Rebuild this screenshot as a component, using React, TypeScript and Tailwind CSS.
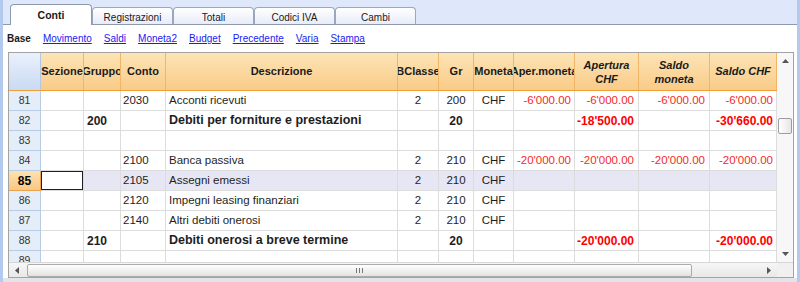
import React from "react";

type Row = {
  n: number;
  gruppo?: string;
  conto?: string;
  desc?: string;
  bclasse?: string;
  gr?: string;
  moneta?: string;
  apMon?: string;
  apChf?: string;
  saMon?: string;
  saChf?: string;
  bold?: boolean;
  sel?: boolean;
};

const rows: Row[] = [
  { n: 81, conto: "2030", desc: "Acconti ricevuti", bclasse: "2", gr: "200", moneta: "CHF", apMon: "-6'000.00", apChf: "-6'000.00", saMon: "-6'000.00", saChf: "-6'000.00" },
  { n: 82, gruppo: "200", desc: "Debiti per forniture e prestazioni", gr: "20", apChf: "-18'500.00", saChf: "-30'660.00", bold: true },
  { n: 83 },
  { n: 84, conto: "2100", desc: "Banca passiva", bclasse: "2", gr: "210", moneta: "CHF", apMon: "-20'000.00", apChf: "-20'000.00", saMon: "-20'000.00", saChf: "-20'000.00" },
  { n: 85, conto: "2105", desc: "Assegni emessi", bclasse: "2", gr: "210", moneta: "CHF", sel: true },
  { n: 86, conto: "2120", desc: "Impegni leasing finanziari", bclasse: "2", gr: "210", moneta: "CHF" },
  { n: 87, conto: "2140", desc: "Altri debiti onerosi", bclasse: "2", gr: "210", moneta: "CHF" },
  { n: 88, gruppo: "210", desc: "Debiti onerosi a breve termine", gr: "20", apChf: "-20'000.00", saChf: "-20'000.00", bold: true },
  { n: 89 },
];

const cols = "grid grid-cols-[32px_43px_37px_45px_232px_41px_35px_40px_61px_64px_71px_67px]";

const tabs = ["Registrazioni", "Totali", "Codici IVA", "Cambi"];
const links = ["Movimento", "Saldi", "Moneta2", "Budget", "Precedente", "Varia", "Stampa"];

function TabStrip() {
  return (
    <div className="flex h-[25px] shrink-0 items-end border-b border-[#8e9aae] pl-[7px]">
      <div className="relative z-10 -mb-px flex h-[21px] w-[82px] items-center justify-center rounded-t-[4px] border border-b-0 border-[#8e9aae] bg-white pt-[1px] text-[10.5px] font-bold">
        Conti
      </div>
      {tabs.map((t) => (
        <div
          key={t}
          className="flex h-[17px] w-[81px] items-center justify-center rounded-t-[4px] border border-b-0 border-[#9ba7ba] bg-gradient-to-b from-white to-[#e8ecf8] pt-[2px] text-[10px]"
        >
          {t}
        </div>
      ))}
    </div>
  );
}

function LinkBar() {
  return (
    <div className="flex h-[27px] shrink-0 items-center gap-[12px] pl-[4px] text-[10px]">
      <span className="font-bold">Base</span>
      {links.map((l) => (
        <a key={l} href="#" className="text-[#1b1bf0] underline">
          {l}
        </a>
      ))}
    </div>
  );
}

function HeaderRow() {
  const hc = "flex items-center justify-center overflow-hidden whitespace-nowrap border-r border-[#f0b566] text-[11px] font-bold";
  return (
    <div className={`${cols} h-[38px] border-b border-[#ee9f3a] bg-gradient-to-b from-[#fde4b6] to-[#f9cb87]`}>
      <div className="border-r border-[#b3c7e4] bg-gradient-to-b from-[#eaf1fc] to-[#c9daf3]" />
      <div className={hc}>Sezione</div>
      <div className={hc}>Gruppo</div>
      <div className={hc}>Conto</div>
      <div className={hc}>Descrizione</div>
      <div className={hc}>BClasse</div>
      <div className={hc}>Gr</div>
      <div className={hc}>Moneta</div>
      <div className={hc}>Aper.moneta</div>
      <div className={`${hc} text-center italic leading-[14px]`}>
        <span>Apertura<br />CHF</span>
      </div>
      <div className={`${hc} text-center italic leading-[14px]`}>
        <span>Saldo<br />moneta</span>
      </div>
      <div className={`${hc} italic`}>Saldo CHF</div>
    </div>
  );
}

function DataRow({ r }: { r: Row }) {
  const c = "flex items-center overflow-hidden whitespace-nowrap border-r border-b border-[#dcdcdc]";
  const txt = r.bold ? "font-bold text-[12px]" : "text-[11.5px]";
  const red = r.bold ? "font-bold text-[12px] text-[#ff0000]" : "text-[11.5px] text-[#f42a2a]";
  return (
    <div className={`${cols} h-[20px] ${r.sel ? "bg-[#e6e6f4]" : "bg-white"} text-[#1e1e1e]`}>
      <div
        className={`flex items-center justify-center border-b border-r ${
          r.sel
            ? "border-[#eda24a] bg-gradient-to-b from-[#fde2b2] to-[#f9c882] text-[12px] font-bold text-black"
            : "border-[#b9cce6] bg-[#e5edf8] text-[10.5px] text-[#333]"
        }`}
      >
        {r.n}
      </div>
      <div className={`${c} ${r.sel ? "bg-white shadow-[inset_0_0_0_1px_#1f1f1f]" : ""}`} />
      <div className={`${c} pl-[3px] ${txt}`}>{r.gruppo}</div>
      <div className={`${c} pl-[2px] ${txt}`}>{r.conto}</div>
      <div className={`${c} pl-[3px] ${r.bold ? "text-[12.5px] font-bold" : "text-[11.5px]"}`}>{r.desc}</div>
      <div className={`${c} justify-center ${txt}`}>{r.bclasse}</div>
      <div className={`${c} justify-center ${txt}`}>{r.gr}</div>
      <div className={`${c} justify-center ${txt}`}>{r.moneta}</div>
      <div className={`${c} justify-end pr-[3px] ${red}`}>{r.apMon}</div>
      <div className={`${c} justify-end pr-[4px] ${red}`}>{r.apChf}</div>
      <div className={`${c} justify-end pr-[4px] ${red}`}>{r.saMon}</div>
      <div className={`${c} justify-end pr-[3px] ${red}`}>{r.saChf}</div>
    </div>
  );
}

function VScroll() {
  return (
    <div className="flex w-[16px] shrink-0 flex-col bg-[#f7f7f7]">
      <div className="flex h-[16px] items-center justify-center">
        <svg width="7" height="4" viewBox="0 0 7 4"><polygon points="3.5,0 7,4 0,4" fill="#555" /></svg>
      </div>
      <div className="flex-1">
        <div className="mx-[1px] mt-[49px] h-[16px] rounded-[2px] border border-[#9c9c9c] bg-gradient-to-r from-white to-[#e6e6e6]" />
      </div>
      <div className="flex h-[16px] items-center justify-center">
        <svg width="7" height="4" viewBox="0 0 7 4"><polygon points="0,0 7,0 3.5,4" fill="#555" /></svg>
      </div>
    </div>
  );
}

function HScroll() {
  return (
    <div className="flex h-[15px] shrink-0 border-t border-[#d6d6d6] bg-gradient-to-b from-[#f6f6f6] to-[#e8e8e8]">
      <div className="flex w-[16px] items-center justify-center">
        <svg width="4" height="7" viewBox="0 0 4 7"><polygon points="0,3.5 4,0 4,7" fill="#555" /></svg>
      </div>
      <div className="flex flex-1 items-center pl-[2px]">
        <div className="flex h-[13px] w-[665px] items-center justify-center gap-[2px] rounded-[2px] border border-[#aaaaaa] bg-gradient-to-b from-white to-[#e2e2e2]">
          <span className="h-[5px] w-px bg-[#777]" />
          <span className="h-[5px] w-px bg-[#777]" />
          <span className="h-[5px] w-px bg-[#777]" />
        </div>
      </div>
      <div className="flex w-[16px] items-center justify-center">
        <svg width="4" height="7" viewBox="0 0 4 7"><polygon points="4,3.5 0,0 0,7" fill="#555" /></svg>
      </div>
      <div className="w-[16px] bg-[#f0f0f0]" />
    </div>
  );
}

export default function App() {
  return (
    <div className="flex h-[282px] w-[800px] overflow-hidden bg-[#dfe8fb] font-['Liberation_Sans',Arial,sans-serif] text-[#1a1a1a]">
      <div className="w-[3px] shrink-0 bg-[#b4c9ee]" />
      <div className="flex min-w-0 flex-1 flex-col">
        <TabStrip />
        <div className="flex flex-1 flex-col bg-white">
          <LinkBar />
          {/* grid ----------------------------------------------------- */}
          <div className="ml-[5px] mr-[3px] flex shrink-0 flex-col border border-[#a3a3a3]">
            <div className="flex h-[209px]">
              <div className="w-[768px] overflow-hidden">
                <HeaderRow />
                {rows.map((r) => (
                  <DataRow key={r.n} r={r} />
                ))}
              </div>
              <VScroll />
            </div>
            <HScroll />
          </div>
          <div className="flex-1 bg-[#e3e4e9]" />
        </div>
      </div>
      <div className="w-[3px] shrink-0 bg-[#b4c9ee]" />
    </div>
  );
}
